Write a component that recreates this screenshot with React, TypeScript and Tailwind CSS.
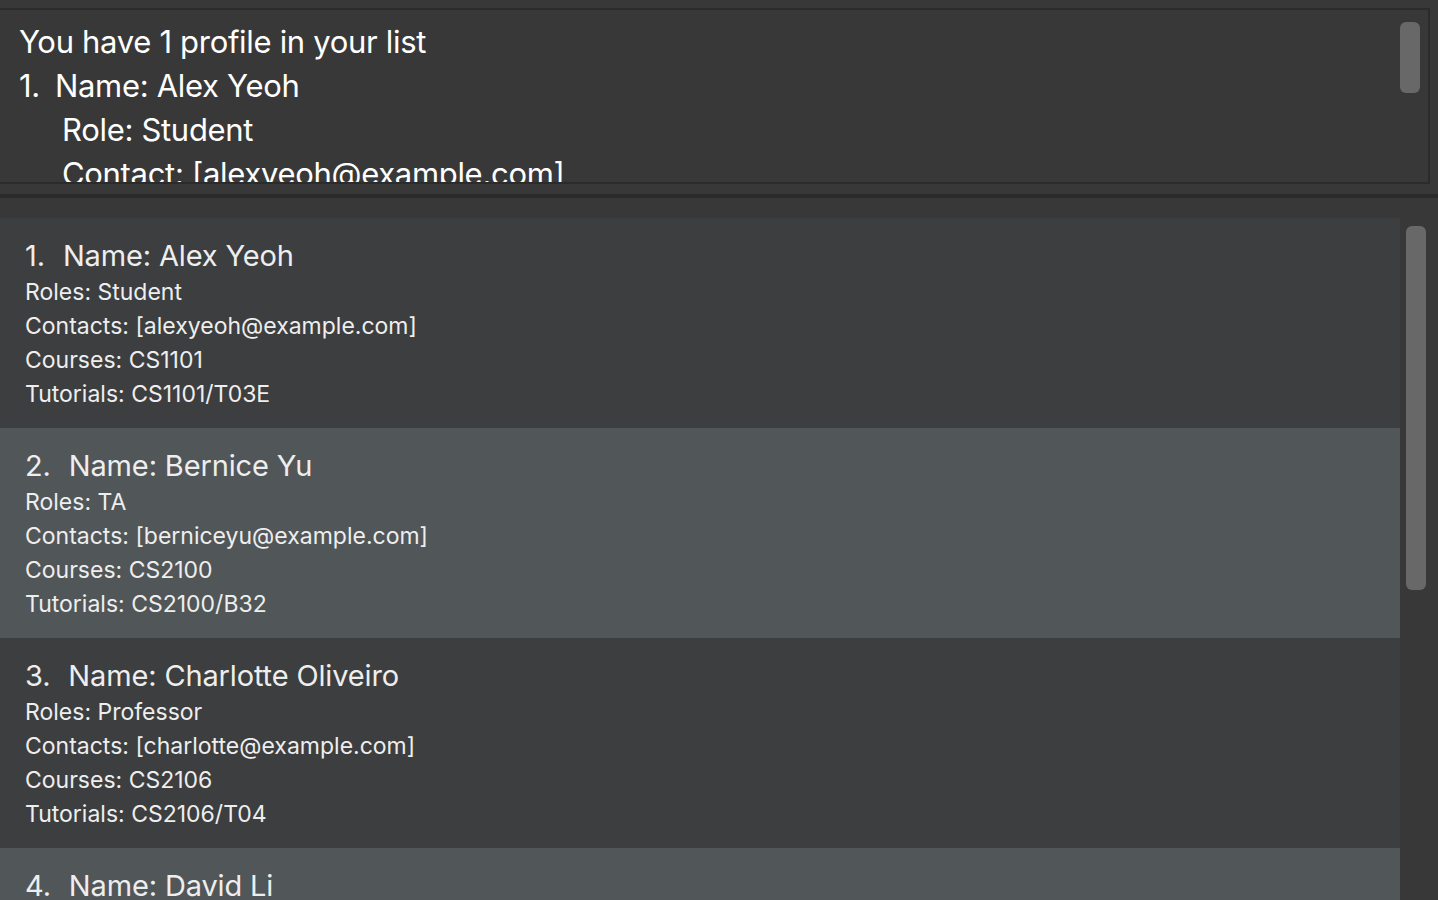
const profiles = [
  { name: 'Alex Yeoh', roles: 'Student', contacts: '[alexyeoh@example.com]', courses: 'CS1101', tutorials: 'CS1101/T03E' },
  { name: 'Bernice Yu', roles: 'TA', contacts: '[berniceyu@example.com]', courses: 'CS2100', tutorials: 'CS2100/B32' },
  { name: 'Charlotte Oliveiro', roles: 'Professor', contacts: '[charlotte@example.com]', courses: 'CS2106', tutorials: 'CS2106/T04' },
  { name: 'David Li', roles: 'Student', contacts: '[lidavid@example.com]', courses: 'CS2103T', tutorials: 'CS2103T/F12' },
]

function ProfileCard({ p, index }: { p: (typeof profiles)[number]; index: number }) {
  return (
    <div className={`h-[210px] shrink-0 pl-[25px] pt-[20px] text-[#eeeeee] ${index % 2 === 0 ? 'bg-[#3c3e3f]' : 'bg-[#515658]'}`}>
      <div className="flex gap-[18px] text-[29px] leading-[36px] tracking-[-0.005em]">
        <span>{index + 1}.</span>
        <span>Name: {p.name}</span>
      </div>
      <div className="pt-[1px] text-[23px] leading-[34px]">
        <div>Roles: {p.roles}</div>
        <div>Contacts: {p.contacts}</div>
        <div>Courses: {p.courses}</div>
        <div>Tutorials: {p.tutorials}</div>
      </div>
    </div>
  )
}

export default function App() {
  return (
    <div className="flex h-[900px] w-[1438px] flex-col overflow-hidden bg-[#383838] font-['Inter',sans-serif]">
      <div className="pr-[8px] pt-[8px]">
        <div className="relative h-[176px] overflow-hidden border-y-2 border-r-2 border-[#2b2b2b] bg-[#383838] pl-[19px] pt-[10px] text-[31px] leading-[44px] tracking-[-0.01em] text-white">
          <div>You have 1 profile in your list</div>
          <div className="flex gap-[15px]">
            <span>1.</span>
            <span>Name: Alex Yeoh</span>
          </div>
          <div className="pl-[43px]">Role: Student</div>
          <div className="pl-[43px]">Contact: [alexyeoh@example.com]</div>
          <div className="absolute right-[8px] top-[12px] h-[71px] w-[20px] rounded-[6px] bg-[#686868]" />
        </div>
      </div>
      <div className="mt-[10px] h-[4px] shrink-0 bg-[#2b2b2b]" />
      <div className="flex min-h-0 flex-1 pt-[20px]">
        <div className="flex w-[1400px] flex-col">
          {profiles.map((p, i) => (
            <ProfileCard key={p.name} p={p} index={i} />
          ))}
        </div>
        <div className="flex-1 bg-[#383838] pl-[6px] pt-[8px]">
          <div className="h-[364px] w-[20px] rounded-[6px] bg-[#686868]" />
        </div>
      </div>
    </div>
  )
}
